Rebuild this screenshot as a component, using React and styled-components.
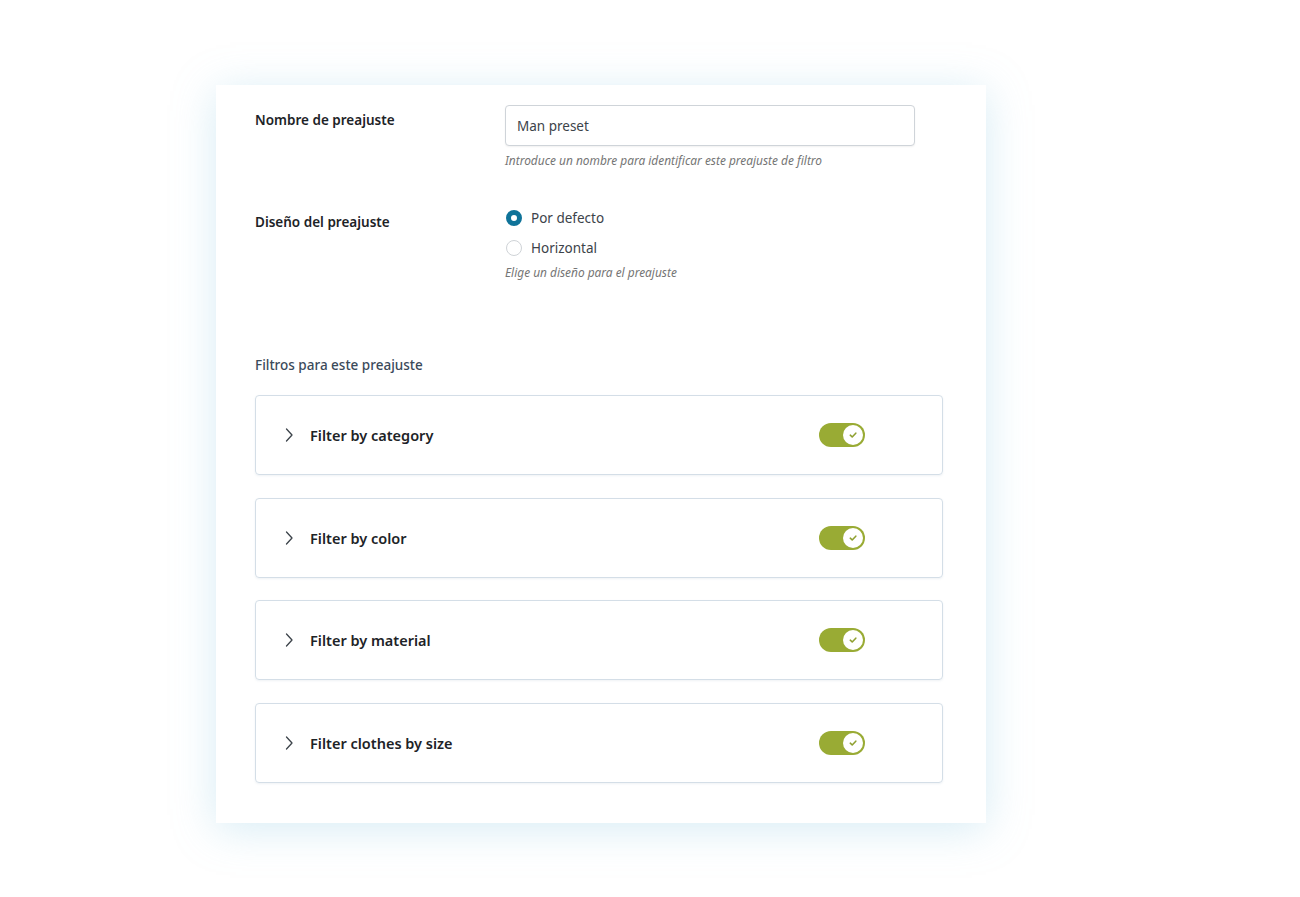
import styled, { createGlobalStyle } from 'styled-components'

const GlobalStyle = createGlobalStyle`
  body {
    margin: 0;
    background: #ffffff;
    font-family: "Noto Sans", "Open Sans", sans-serif;
  }
`

const Page = styled.div`
  padding: 85px 0 60px 216px;
`

const Panel = styled.section`
  width: 770px;
  box-sizing: border-box;
  background: #ffffff;
  padding: 20px 43px 40px 39px;
  box-shadow: 0 6px 40px rgba(140, 200, 225, 0.35);
`

const FieldRow = styled.div`
  display: grid;
  grid-template-columns: 250px 410px;
  margin-top: ${p => p.$top || 0}px;
`

const Label = styled.div`
  font-size: 13.5px;
  font-weight: 600;
  line-height: 20px;
  color: #1d2327;
  padding-top: ${p => p.$pad}px;
`

const TextInput = styled.input`
  width: 410px;
  height: 41px;
  box-sizing: border-box;
  border: 1px solid #cfd4d9;
  border-radius: 4px;
  padding: 0 11px;
  font-family: inherit;
  font-size: 13.5px;
  color: #3c434a;
  box-shadow: 0 1px 2px rgba(0, 0, 0, 0.06);
  outline: none;
`

const Help = styled.p`
  margin: ${p => p.$top || 0}px 0 0;
  font-size: 11.9px;
  line-height: 18px;
  font-style: italic;
  color: #757575;
`

const RadioRow = styled.label`
  display: flex;
  align-items: center;
  gap: 9px;
  height: 30px;
  font-size: 13.5px;
  color: #3c434a;
`

const RadioDot = styled.span`
  width: 16px;
  height: 16px;
  box-sizing: border-box;
  border-radius: 50%;
  margin-left: 1px;
  border: ${p => (p.$on ? '5px solid #0f7399' : '1px solid #cfd3d7')};
  background: #ffffff;
`

const Heading = styled.h3`
  margin: 74px 0 20px;
  font-size: 13.5px;
  font-weight: 500;
  line-height: 20px;
  color: #3b4a5a;
`

const FilterList = styled.div`
  display: flex;
  flex-direction: column;
  gap: 22.5px;
`

const FilterCard = styled.div`
  height: 80px;
  box-sizing: border-box;
  display: flex;
  align-items: center;
  padding-left: 28px;
  border: 1px solid #d4dee7;
  border-radius: 4px;
  box-shadow: 0 1px 2px rgba(120, 150, 170, 0.12);
`

const Title = styled.span`
  flex: 1;
  margin-left: 16px;
  font-size: 14.5px;
  font-weight: 600;
  color: #1d2327;
`

const Toggle = styled.span`
  display: flex;
  align-items: center;
  justify-content: flex-end;
  width: 46px;
  height: 24px;
  box-sizing: border-box;
  padding: 2px;
  margin-right: 77px;
  border-radius: 12px;
  background: #99ab34;
`

const Knob = styled.span`
  width: 20px;
  height: 20px;
  border-radius: 50%;
  background: #ffffff;
  display: flex;
  align-items: center;
  justify-content: center;
`

const Chevron = () => (
  <svg width="10" height="16" viewBox="0 0 10 16" fill="none">
    <path d="M2.5 2 L8 8 L2.5 14" stroke="#3c434a" strokeWidth="1.3" strokeLinecap="round" strokeLinejoin="round" />
  </svg>
)

const Check = () => (
  <svg width="10" height="10" viewBox="0 0 10 10" fill="none">
    <path d="M2.3 5.2 L4.2 7 L7.8 3.2" stroke="#8fa030" strokeWidth="1.6" strokeLinecap="round" strokeLinejoin="round" />
  </svg>
)

const filters = ['Filter by category', 'Filter by color', 'Filter by material', 'Filter clothes by size']

export default function App() {
  return (
    <Page>
      <GlobalStyle />
      <Panel>
        <FieldRow>
          <Label $pad={5}>Nombre de preajuste</Label>
          <div>
            <TextInput defaultValue="Man preset" />
            <Help $top={5}>Introduce un nombre para identificar este preajuste de filtro</Help>
          </div>
        </FieldRow>

        <FieldRow $top={34}>
          <Label $pad={9}>Diseño del preajuste</Label>
          <div>
            <RadioRow><RadioDot $on />Por defecto</RadioRow>
            <RadioRow><RadioDot />Horizontal</RadioRow>
            <Help>Elige un diseño para el preajuste</Help>
          </div>
        </FieldRow>

        <Heading>Filtros para este preajuste</Heading>

        <FilterList>
          {filters.map(name => (
            <FilterCard key={name}>
              <Chevron />
              <Title>{name}</Title>
              <Toggle>
                <Knob><Check /></Knob>
              </Toggle>
            </FilterCard>
          ))}
        </FilterList>
      </Panel>
    </Page>
  )
}
